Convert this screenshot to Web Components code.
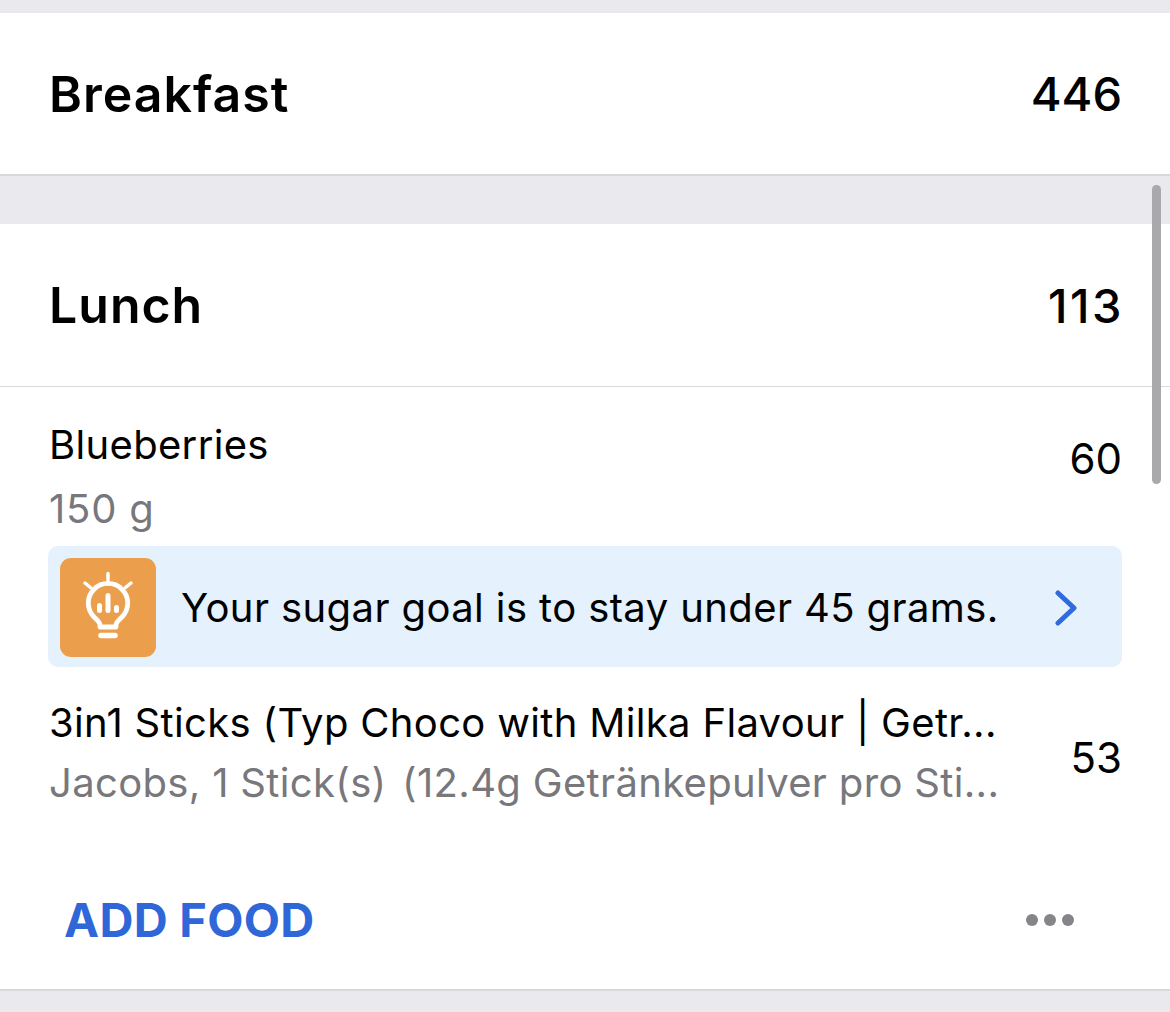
<!DOCTYPE html>
<html>
<head>
<meta charset="utf-8">
<style>
  html, body { margin: 0; height: 100%; background: #e9e9ee; overflow: hidden; }
  body { font-family: Inter, "Liberation Sans", sans-serif; color: #000; }
</style>
</head>
<body>
<diary-page>
  <meal-card name="Breakfast" calories="446"></meal-card>
  <meal-card name="Lunch" calories="113" open>
    <food-row calories="60" kind="first">
      <span slot="name">Blueberries</span>
      <span slot="detail">150 g</span>
    </food-row>
    <tip-banner>Your sugar goal is to stay under 45 grams.</tip-banner>
    <food-row calories="53">
      <span slot="name">3in1 Sticks (Typ Choco with Milka Flavour | Getr...</span>
      <span slot="detail">Jacobs, 1 Stick(s) &#8202;(12.4g Getränkepulver pro Sti...</span>
    </food-row>
    <card-actions></card-actions>
  </meal-card>
</diary-page>

<script>
  class DiaryPage extends HTMLElement {
    constructor() {
      super();
      this.attachShadow({ mode: 'open' });
      this.shadowRoot.innerHTML = `
        <style>
          :host { display: flex; flex-direction: column; gap: 48px; padding-top: 13px; position: relative; height: 1012px; box-sizing: border-box; }
          .scrollbar { position: absolute; left: 1152px; top: 185px; width: 9px; height: 299px; border-radius: 5px; background: #a9a9ac; }
        </style>
        <slot></slot>
        <div class="scrollbar"></div>
      `;
    }
  }
  customElements.define('diary-page', DiaryPage);

  class MealCard extends HTMLElement {
    constructor() {
      super();
      this.attachShadow({ mode: 'open' });
      this.shadowRoot.innerHTML = `
        <style>
          :host { display: block; background: #fff; border-bottom: 2px solid #d8d8dc; }
          header { display: flex; justify-content: space-between; align-items: center; height: 161px; padding: 0 48px 0 49px; }
          h2 { margin: 0; font-size: 50px; font-weight: 600; letter-spacing: 1px; }
          .cal { font-size: 47px; font-weight: 500; }
          :host([open]) header { height: 162px; border-bottom: 1px solid #d9d9dc; }
          :host([open]) .cal { letter-spacing: 2.5px; margin-right: -2px; }
        </style>
        <header>
          <h2>${this.getAttribute('name')}</h2>
          <span class="cal">${this.getAttribute('calories')}</span>
        </header>
        <slot></slot>
      `;
    }
  }
  customElements.define('meal-card', MealCard);

  class FoodRow extends HTMLElement {
    constructor() {
      super();
      this.attachShadow({ mode: 'open' });
      this.shadowRoot.innerHTML = `
        <style>
          :host { display: flex; justify-content: space-between; align-items: flex-start; height: 184px; padding: 0 48px 0 49px; box-sizing: border-box; }
          :host([kind="first"]) { height: 159px; }
          .text { display: flex; flex-direction: column; gap: 10px; padding-top: 31px; white-space: nowrap; }
          :host([kind="first"]) .text { gap: 14px; padding-top: 33px; }
          .name, .detail { font-size: 40px; line-height: 50px; letter-spacing: 0.33px; }
          .detail { color: #77777c; }
          :host([kind="first"]) .detail { letter-spacing: 0.8px; }
          .cal { font-size: 42px; line-height: 50px; margin-top: 66px; }
          :host([kind="first"]) .cal { margin-top: 47px; }
        </style>
        <div class="text">
          <div class="name"><slot name="name"></slot></div>
          <div class="detail"><slot name="detail"></slot></div>
        </div>
        <span class="cal">${this.getAttribute('calories')}</span>
      `;
    }
  }
  customElements.define('food-row', FoodRow);

  class TipBanner extends HTMLElement {
    constructor() {
      super();
      this.attachShadow({ mode: 'open' });
      this.shadowRoot.innerHTML = `
        <style>
          :host { display: flex; align-items: center; height: 121px; margin: 0 48px; padding: 2px 11px 0 12px; box-sizing: border-box; background: #e5f1fc; border-radius: 10px; }
          .icon { width: 96px; height: 99px; border-radius: 11px; background: #eb9f4c; flex: none; display: block; }
          .msg { margin-left: 25px; font-size: 40px; flex: 1; white-space: nowrap; letter-spacing: 0.4px; }
          .chev { flex: none; margin-right: 34px; display: block; }
        </style>
        <svg class="icon" viewBox="0 0 96 99" fill="none" stroke="#fff" stroke-linecap="round">
          <path d="M48 15.500v6.500M25 25l5.500 4.500M71 25l-5.500 4.500" stroke-width="3.500"/>
          <path d="M40 69v-2c0-3-3-5-6-8a19.700 19.700 0 1 1 28 0c-3 3-6 5-6 8v2z" stroke-width="4.800" stroke-linejoin="round"/>
          <path d="M39.500 47.500v5M48 37.500v15M56.500 49.500v3" stroke-width="5"/>
          <path d="M41 77.500h14" stroke-width="5.500"/>
        </svg>
        <span class="msg"><slot></slot></span>
        <svg class="chev" width="22" height="36" viewBox="0 0 22 36" fill="none" stroke="#2f6bdc" stroke-width="5" stroke-linecap="round" stroke-linejoin="round">
          <path d="M3 3l16 15L3 33"/>
        </svg>
      `;
    }
  }
  customElements.define('tip-banner', TipBanner);

  class CardActions extends HTMLElement {
    constructor() {
      super();
      this.attachShadow({ mode: 'open' });
      this.shadowRoot.innerHTML = `
        <style>
          :host { display: flex; justify-content: space-between; align-items: center; height: 138px; padding: 0 96px 0 64px; box-sizing: border-box; }
          .add { font-size: 47px; font-weight: 700; color: #2f66d8; letter-spacing: 0.3px; margin-bottom: 2px; }
          .dots { display: flex; gap: 6px; }
          .dots i { width: 12px; height: 12px; border-radius: 50%; background: #858589; display: block; }
        </style>
        <span class="add">ADD FOOD</span>
        <div class="dots"><i></i><i></i><i></i></div>
      `;
    }
  }
  customElements.define('card-actions', CardActions);
</script>
</body>
</html>
